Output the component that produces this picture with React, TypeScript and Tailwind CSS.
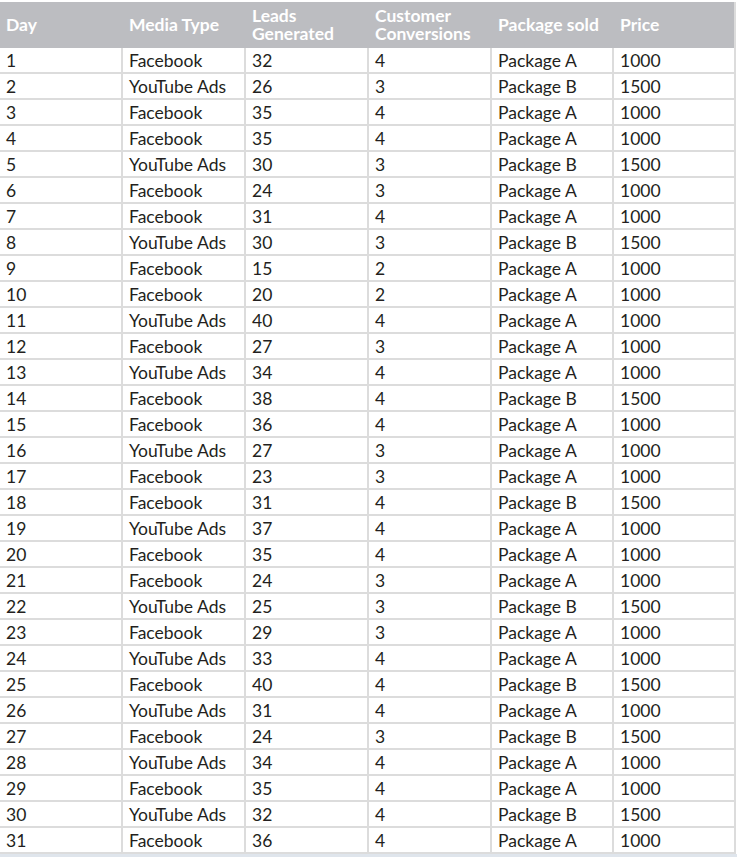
const rows: [number, string, number, number, string, number][] = [
  [1, 'Facebook', 32, 4, 'Package A', 1000],
  [2, 'YouTube Ads', 26, 3, 'Package B', 1500],
  [3, 'Facebook', 35, 4, 'Package A', 1000],
  [4, 'Facebook', 35, 4, 'Package A', 1000],
  [5, 'YouTube Ads', 30, 3, 'Package B', 1500],
  [6, 'Facebook', 24, 3, 'Package A', 1000],
  [7, 'Facebook', 31, 4, 'Package A', 1000],
  [8, 'YouTube Ads', 30, 3, 'Package B', 1500],
  [9, 'Facebook', 15, 2, 'Package A', 1000],
  [10, 'Facebook', 20, 2, 'Package A', 1000],
  [11, 'YouTube Ads', 40, 4, 'Package A', 1000],
  [12, 'Facebook', 27, 3, 'Package A', 1000],
  [13, 'YouTube Ads', 34, 4, 'Package A', 1000],
  [14, 'Facebook', 38, 4, 'Package B', 1500],
  [15, 'Facebook', 36, 4, 'Package A', 1000],
  [16, 'YouTube Ads', 27, 3, 'Package A', 1000],
  [17, 'Facebook', 23, 3, 'Package A', 1000],
  [18, 'Facebook', 31, 4, 'Package B', 1500],
  [19, 'YouTube Ads', 37, 4, 'Package A', 1000],
  [20, 'Facebook', 35, 4, 'Package A', 1000],
  [21, 'Facebook', 24, 3, 'Package A', 1000],
  [22, 'YouTube Ads', 25, 3, 'Package B', 1500],
  [23, 'Facebook', 29, 3, 'Package A', 1000],
  [24, 'YouTube Ads', 33, 4, 'Package A', 1000],
  [25, 'Facebook', 40, 4, 'Package B', 1500],
  [26, 'YouTube Ads', 31, 4, 'Package A', 1000],
  [27, 'Facebook', 24, 3, 'Package B', 1500],
  [28, 'YouTube Ads', 34, 4, 'Package A', 1000],
  [29, 'Facebook', 35, 4, 'Package A', 1000],
  [30, 'YouTube Ads', 32, 4, 'Package B', 1500],
  [31, 'Facebook', 36, 4, 'Package A', 1000],
]

const cols = 'grid grid-cols-[123px_123px_123px_123px_122px_121px]'

export default function App() {
  return (
    <div className="w-[737px] bg-white pt-[2px] font-['Lato',sans-serif] text-[#231f20]">
      <div className="w-[736px] border-r-2 border-[#dcdcdc]">
        <div
          className={`${cols} h-[46px] bg-[#bcbdc1] text-[17.5px] font-bold leading-[18px] text-white`}
        >
          <div className="flex items-center px-[6px]">Day</div>
          <div className="flex items-center px-[6px]">Media Type</div>
          <div className="flex items-center px-[6px]">Leads<br />Generated</div>
          <div className="flex items-center px-[6px]">Customer<br />Conversions</div>
          <div className="flex items-center px-[6px]">Package sold</div>
          <div className="flex items-center px-[6px]">Price</div>
        </div>
        {rows.map((r) => (
          <div
            key={r[0]}
            className={`${cols} h-[26px] border-b-2 border-[#dcdcdc] text-[17.5px] leading-[26px]`}
          >
            {r.map((v, i) => (
              <div
                key={i}
                className={`px-[6px] ${i < 5 ? 'border-r-2 border-[#dcdcdc]' : ''}`}
              >
                {v}
              </div>
            ))}
          </div>
        ))}
      </div>
      <div className="h-[3px] bg-[#dfe5ec]" />
    </div>
  )
}
